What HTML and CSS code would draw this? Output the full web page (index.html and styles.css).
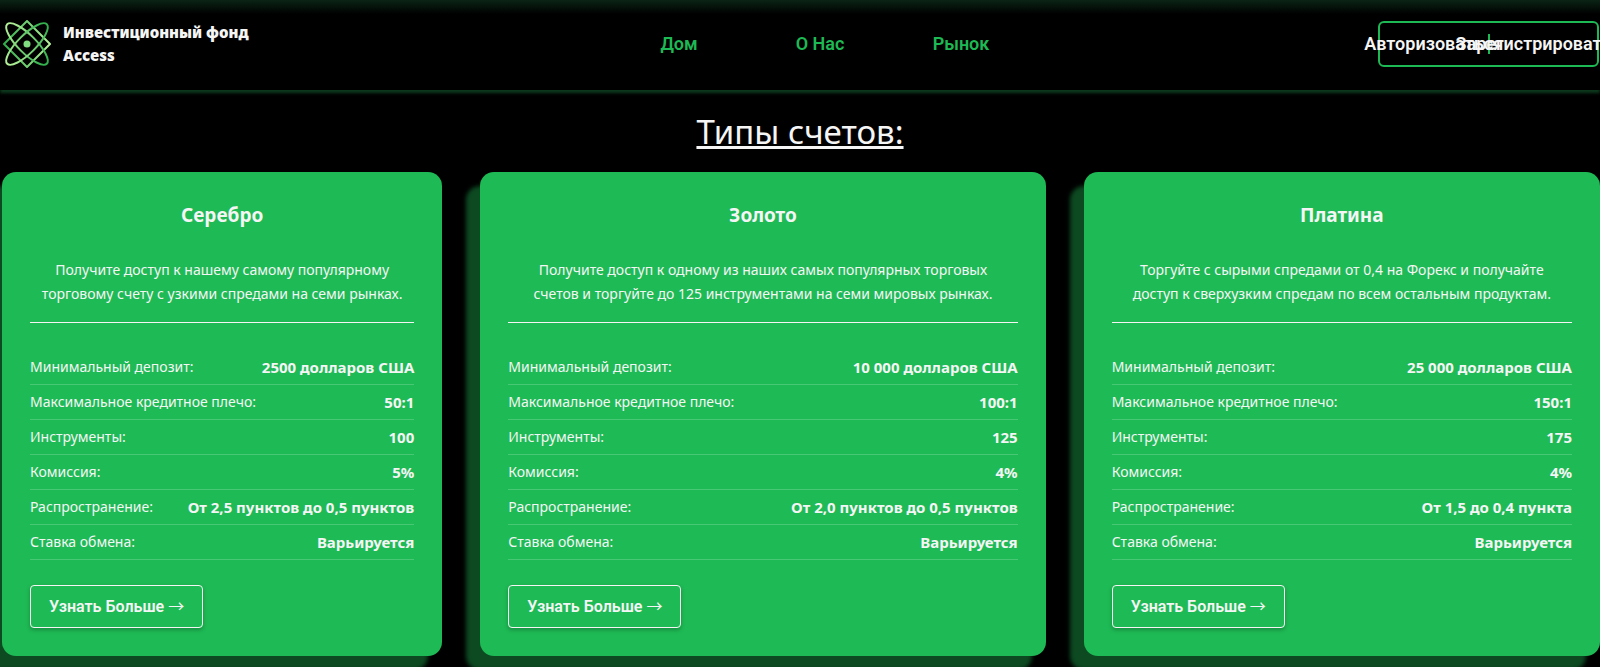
FILE: index.html
```html
<!DOCTYPE html>
<html lang="ru">
<head>
  <meta charset="UTF-8">
  <meta name="viewport" content="width=device-width, initial-scale=1">
  <title>Инвестиционный фонд Access</title>
  <link rel="stylesheet" href="styles.css">
</head>
<body>
  <header class="header">
    <a class="logo" href="#">
      <svg class="logo-icon" viewBox="0 0 48 48" fill="none" stroke-width="2">
        <defs>
          <linearGradient id="green" x1="0" y1="0" x2="1" y2="0">
            <stop offset="0" stop-color="#b4f09a"/>
            <stop offset="1" stop-color="#2fae4b"/>
          </linearGradient>
          <linearGradient id="greenBack" x1="0" y1="0" x2="1" y2="0">
            <stop offset="0" stop-color="#2fae4b"/>
            <stop offset="1" stop-color="#b4f09a"/>
          </linearGradient>
        </defs>
        <path d="M24 1L47 24L24 47L1 24Z" stroke="url(#greenBack)" stroke-linejoin="round"/>
        <ellipse cx="24" cy="24" rx="28" ry="9" transform="rotate(45 24 24)" stroke="url(#green)"/>
        <ellipse cx="24" cy="24" rx="28" ry="9" transform="rotate(-45 24 24)" stroke="url(#green)"/>
        <circle cx="24" cy="24" r="3.500" fill="#7fdc80"/>
      </svg>
      <span>Инвестиционный фонд<br>Access</span>
    </a>
    <nav class="nav">
      <a href="#">Дом</a>
      <a href="#">О Нас</a>
      <a href="#">Рынок</a>
    </nav>
    <div class="auth">
      <button type="button">Авторизоваться</button>
      <button type="button">Зарегистрироваться</button>
    </div>
  </header>

  <main>
    <h1>Типы счетов:</h1>
    <div class="cards">
      <section class="card">
        <h2>Серебро</h2>
        <p>Получите доступ к нашему самому популярному<br>торговому счету с узкими спредами на семи рынках.</p>
        <table>
          <tr><th scope="row">Минимальный депозит:</th><td>2500 долларов США</td></tr>
          <tr><th scope="row">Максимальное кредитное плечо:</th><td>50:1</td></tr>
          <tr><th scope="row">Инструменты:</th><td>100</td></tr>
          <tr><th scope="row">Комиссия:</th><td>5%</td></tr>
          <tr><th scope="row">Распространение:</th><td>От 2,5 пунктов до 0,5 пунктов</td></tr>
          <tr><th scope="row">Ставка обмена:</th><td>Варьируется</td></tr>
        </table>
        <button class="more" type="button">Узнать Больше <span class="arrow">→</span></button>
      </section>
      <section class="card">
        <h2>Золото</h2>
        <p>Получите доступ к одному из наших самых популярных торговых<br>счетов и торгуйте до 125 инструментами на семи мировых рынках.</p>
        <table>
          <tr><th scope="row">Минимальный депозит:</th><td>10 000 долларов США</td></tr>
          <tr><th scope="row">Максимальное кредитное плечо:</th><td>100:1</td></tr>
          <tr><th scope="row">Инструменты:</th><td>125</td></tr>
          <tr><th scope="row">Комиссия:</th><td>4%</td></tr>
          <tr><th scope="row">Распространение:</th><td>От 2,0 пунктов до 0,5 пунктов</td></tr>
          <tr><th scope="row">Ставка обмена:</th><td>Варьируется</td></tr>
        </table>
        <button class="more" type="button">Узнать Больше <span class="arrow">→</span></button>
      </section>
      <section class="card">
        <h2>Платина</h2>
        <p>Торгуйте с сырыми спредами от 0,4 на Форекс и получайте<br>доступ к сверхузким спредам по всем остальным продуктам.</p>
        <table>
          <tr><th scope="row">Минимальный депозит:</th><td>25 000 долларов США</td></tr>
          <tr><th scope="row">Максимальное кредитное плечо:</th><td>150:1</td></tr>
          <tr><th scope="row">Инструменты:</th><td>175</td></tr>
          <tr><th scope="row">Комиссия:</th><td>4%</td></tr>
          <tr><th scope="row">Распространение:</th><td>От 1,5 до 0,4 пункта</td></tr>
          <tr><th scope="row">Ставка обмена:</th><td>Варьируется</td></tr>
        </table>
        <button class="more" type="button">Узнать Больше <span class="arrow">→</span></button>
      </section>
    </div>
  </main>
</body>
</html>
```
FILE: styles.css
```css
* {
  box-sizing: border-box;
}
body {
  margin: 0;
  background-color: #000;
  color: #f5f5f5;
  font-family: "Segoe UI", "Noto Sans", sans-serif;
  font-size: 14px;
  line-height: 24px;
  overflow-x: hidden;
}
.header {
  display: grid;
  grid-template-columns: 1fr auto 1fr;
  align-items: center;
  padding: 20px 1px 22px 3px;
  background: linear-gradient(#0a2415, #000 14px);
  box-shadow: 0 3px 3px #0e3a1e;
}
.logo {
  display: flex;
  align-items: center;
  gap: 12px;
  color: #f5f5f5;
  font-size: 15px;
  font-weight: 900;
  line-height: 23px;
  text-decoration: none;
}
.logo-icon {
  width: 48px;
  height: 48px;
}
.nav {
  display: grid;
  grid-template-columns: repeat(3, 141px);
  padding-left: 38px;
  text-align: center;
}
.nav a {
  color: #1db954;
  font-family: Roboto, sans-serif;
  font-size: 18px;
  font-weight: 600;
  text-decoration: none;
}
.auth {
  display: flex;
  align-items: center;
  justify-self: end;
  width: 221px;
  height: 46px;
  border: 2px solid #1db954;
  border-radius: 6px;
}
.auth button {
  display: flex;
  justify-content: center;
  flex: 1 1 0;
  min-width: 0;
  padding: 0;
  border: 0;
  background: none;
  color: #f5f5f5;
  font-family: Roboto, sans-serif;
  font-size: 18px;
  font-weight: 600;
  line-height: 20px;
  white-space: nowrap;
}
.auth button:first-child {
  border-right: 2px solid #1db954;
}
h1 {
  margin: 18px 0 16px;
  font-size: 33px;
  font-weight: 400;
  line-height: 48px;
  text-align: center;
  text-decoration: underline;
  text-decoration-thickness: 3px;
}
.cards {
  display: grid;
  grid-template-columns: 440fr 565fr 516fr;
  gap: 38px;
  padding: 0 0 11px 2px;
}
.card {
  padding: 28px;
  border-radius: 14px;
  background-color: #1eba55;
  box-shadow: -14px 14px 4px #0d4a22;
}
.card h2 {
  margin: 0 0 28px;
  font-size: 19px;
  line-height: 30px;
  text-align: center;
}
.card p {
  margin: 0 0 27px;
  padding-bottom: 16px;
  border-bottom: 1px solid #f5f5f5;
  text-align: center;
}
.card table,
.card tbody {
  display: block;
}
.card table {
  margin-bottom: 25px;
  white-space: nowrap;
}
.card tr {
  display: flex;
  justify-content: space-between;
  border-bottom: 1px solid #48c775;
}
.card th,
.card td {
  padding: 5px 0;
}
.card th {
  font-weight: 400;
}
.card td {
  font-size: 15px;
  font-weight: 700;
}
.more {
  height: 43px;
  padding: 0 18px;
  border: 1px solid #f5f5f5;
  border-radius: 4px;
  background: none;
  color: #f5f5f5;
  font-family: Roboto, sans-serif;
  font-size: 16px;
  font-weight: 600;
  box-shadow: 0 2px 4px rgba(0, 0, 0, 0.25);
}
.arrow {
  font-family: "Noto Sans CJK SC", sans-serif;
  font-weight: 400;
  line-height: 16px;
}
```
